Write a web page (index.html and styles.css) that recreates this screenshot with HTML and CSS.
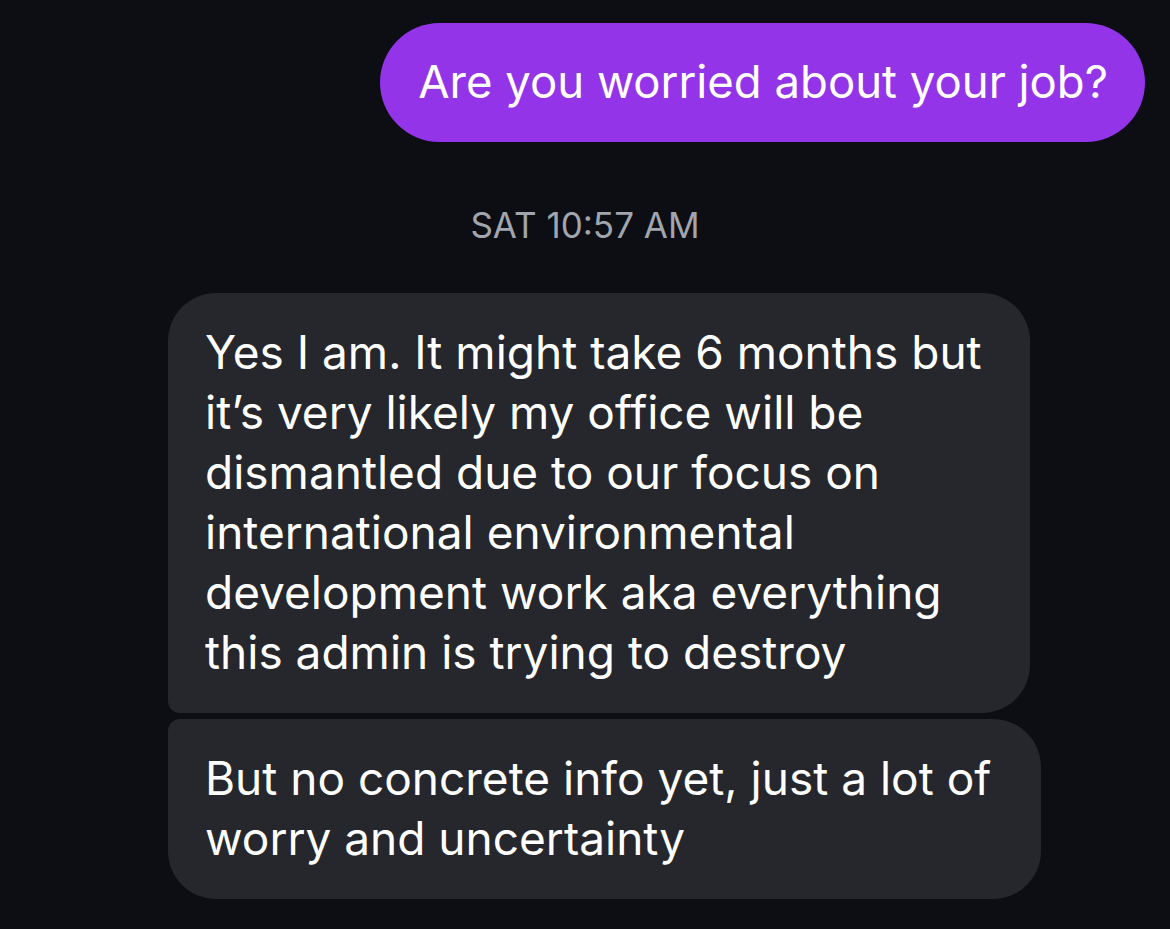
FILE: index.html
```html
<!DOCTYPE html>
<html>
<head>
<meta charset="utf-8">
<link rel="stylesheet" href="styles.css">
</head>
<body>
<div class="chat">
  <div class="row out">
    <div class="bubble sent">Are you worried about your job?</div>
  </div>
  <div class="time">SAT 10:57 AM</div>
  <div class="group">
    <div class="bubble recv first">Yes I am. It might take 6 months but<br>it’s very likely my office will be<br>dismantled due to our focus on<br>international environmental<br>development work aka everything<br>this admin is trying to destroy</div>
    <div class="bubble recv last">But no concrete info yet, just a lot of<br>worry and uncertainty</div>
  </div>
</div>
</body>
</html>
```

FILE: styles.css
```css
html, body {
  margin: 0;
  padding: 0;
  background: #0c0e13;
}
body {
  width: 1170px;
  height: 929px;
  overflow: hidden;
  font-family: Inter, "Liberation Sans", sans-serif;
  color: #ffffff;
}
.chat {
  display: flex;
  flex-direction: column;
  padding-top: 23px;
}
.row.out {
  display: flex;
  justify-content: flex-end;
  padding-right: 25px;
}
.bubble {
  font-size: 46px;
  line-height: 60px;
  white-space: nowrap;
  box-sizing: border-box;
}
.sent {
  background: #9334e9;
  border-radius: 60px;
  font-size: 45.5px;
  padding: 29px 37px 30px 38px;
  height: 119px;
}
.time {
  text-align: center;
  color: #a1a5ad;
  font-size: 35px;
  line-height: 40px;
  margin-top: 63px;
  margin-bottom: 48px;
}
.group {
  display: flex;
  flex-direction: column;
  align-items: flex-start;
  gap: 6px;
  padding-left: 168px;
}
.recv {
  background: #25272c;
  padding: 29px 48px 31px 37px;
}
.recv.first {
  border-radius: 48px 48px 48px 12px;
}
.recv.last {
  border-radius: 12px 48px 48px 48px;
  padding-right: 50px;
}
```
